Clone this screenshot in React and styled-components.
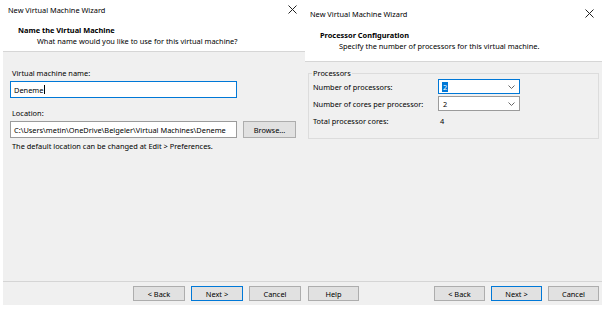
import styled, { createGlobalStyle } from 'styled-components'

const Global = createGlobalStyle`
  *, *::before, *::after {
    box-sizing: border-box;
  }

  body {
    margin: 0;
    background: #ffffff;
    font-family: "Noto Sans", "Open Sans", sans-serif;
    font-size: 7.4px;
    color: #000000;
  }
`

const Page = styled.div`
  display: flex;
  align-items: flex-start;
  height: 332px;
  padding-left: 3px;
`

const Dialog = styled.section`
  background: #f0f0f0;
  display: flex;
  flex-direction: column;
  height: ${p => p.$h}px;
  margin-top: ${p => p.$top}px;
  width: ${p => p.$w}px;
`

const TitleBar = styled.div`
  align-items: center;
  background: #ffffff;
  display: flex;
  height: 19px;
  justify-content: space-between;
  padding: 0 8px 0 5px;
`

const Header = styled.div`
  background: #ffffff;
  border-bottom: 1px solid #d6d6d6;
  height: ${p => p.$h}px;
  padding: ${p => p.$pad}px 0 0 15px;
`

const HeaderTitle = styled.div`
  font-weight: 700;
  line-height: 11px;
`

const HeaderText = styled.div`
  line-height: 11px;
  padding-left: 19px;
`

const Body = styled.div`
  display: flex;
  flex: 1;
  flex-direction: column;
  padding: ${p => p.$pad};
`

const Label = styled.div`
  line-height: 10px;
  margin-bottom: 3px;
  margin-top: ${p => p.$gap || 0}px;
  padding-left: 2px;
`

const Field = styled.div`
  align-items: center;
  background: #ffffff;
  border: 1px solid ${p => (p.$focus ? '#0078d7' : '#9b9b9b')};
  display: flex;
  height: 17px;
  padding-left: 3px;
  width: ${p => p.$w}px;
`

const Caret = styled.span`
  background: #000;
  display: inline-block;
  height: 9px;
  margin-left: 1px;
  width: 1px;
`

const FieldRow = styled.div`
  align-items: center;
  display: flex;
  gap: 6px;
  margin-bottom: 3px;
`

const Button = styled.button`
  background: #e1e1e1;
  border: 1px solid ${p => (p.$primary ? '#0078d7' : '#adadad')};
  color: #000;
  font: inherit;
  height: ${p => p.$h || 15}px;
  padding: 0;
  width: ${p => p.$w || 52}px;
`

const Footer = styled.div`
  align-items: center;
  border-top: 1px solid #d5d5d5;
  display: flex;
  gap: 6px;
  height: 24px;
  padding: 0 ${p => p.$right}px 0 3px;
`

const Spacer = styled.div`
  flex: 1;
`

const Group = styled.fieldset`
  border: 1px solid #dcdcdc;
  margin: 0;
  padding: 0 0 9px 4px;
`

const Legend = styled.legend`
  line-height: 9px;
  margin-left: -1px;
  padding: 0 1px;
`

const GroupRow = styled.div`
  align-items: center;
  display: flex;
  height: 17px;
`

const RowLabel = styled.div`
  width: 125px;
`

const Combo = styled.div`
  align-items: center;
  background: #ffffff;
  border: 1px solid ${p => (p.$focus ? '#0078d7' : '#9b9b9b')};
  display: flex;
  height: 15px;
  justify-content: space-between;
  padding: 0 4px 0 3px;
  width: 82px;
`

const Selected = styled.span`
  background: ${p => (p.$sel ? '#0078d7' : 'transparent')};
  color: ${p => (p.$sel ? '#ffffff' : '#000000')};
  padding: 0 1px;
`

const Value = styled.span`
  padding-left: 2px;
`

function CloseIcon() {
  return (
    <svg width="9" height="9" viewBox="0 0 9 9">
      <path d="M0.5 0.5L8.5 8.5M8.5 0.5L0.5 8.5" stroke="#222" strokeWidth="1" />
    </svg>
  )
}

function Chevron() {
  return (
    <svg width="7" height="4" viewBox="0 0 7 4">
      <path d="M0.5 0.5L3.5 3.5L6.5 0.5" fill="none" stroke="#666" strokeWidth="1" />
    </svg>
  )
}

function Wizard({ w, h, top, headerH, headerPad, title, text, bodyPad, btnW, right, help, children }) {
  return (
    <Dialog $w={w} $h={h} $top={top}>
      <TitleBar>
        <span>New Virtual Machine Wizard</span>
        <CloseIcon />
      </TitleBar>
      <Header $h={headerH} $pad={headerPad}>
        <HeaderTitle>{title}</HeaderTitle>
        <HeaderText>{text}</HeaderText>
      </Header>
      <Body $pad={bodyPad}>{children}</Body>
      <Footer $right={right}>
        {help && <Button $w={btnW}>Help</Button>}
        <Spacer />
        <Button $w={btnW}>&lt; Back</Button>
        <Button $w={btnW} $primary>Next &gt;</Button>
        <Button $w={btnW}>Cancel</Button>
      </Footer>
    </Dialog>
  )
}

export default function App() {
  return (
    <>
      <Global />
      <Page>
        <Wizard
          w={302}
          h={305}
          top={0}
          headerH={33}
          headerPad={6}
          title='Name the Virtual Machine'
          text='What name would you like to use for this virtual machine?'
          bodyPad='16px 0 0 7px'
          btnW={52}
          right={4}
        >
          <Label>Virtual machine name:</Label>
          <Field $focus $w={227}>Deneme<Caret /></Field>
          <Label $gap={10}>Location:</Label>
          <FieldRow>
            <Field $w={227}>C:\Users\metin\OneDrive\Belgeler\Virtual Machines\Deneme</Field>
            <Button $w={53} $h={17}>Browse...</Button>
          </FieldRow>
          <Label>The default location can be changed at Edit &gt; Preferences.</Label>
        </Wizard>
        <Wizard
          w={297}
          h={301}
          top={4}
          headerH={39}
          headerPad={7}
          title='Processor Configuration'
          text='Specify the number of processors for this virtual machine.'
          bodyPad='7px 3px 0 3px'
          btnW={51}
          right={3}
          help
        >
          <Group>
            <Legend>Processors</Legend>
            <GroupRow>
              <RowLabel>Number of processors:</RowLabel>
              <Combo $focus><Selected $sel>2</Selected><Chevron /></Combo>
            </GroupRow>
            <GroupRow>
              <RowLabel>Number of cores per processor:</RowLabel>
              <Combo><Selected>2</Selected><Chevron /></Combo>
            </GroupRow>
            <GroupRow>
              <RowLabel>Total processor cores:</RowLabel>
              <Value>4</Value>
            </GroupRow>
          </Group>
        </Wizard>
      </Page>
    </>
  )
}
